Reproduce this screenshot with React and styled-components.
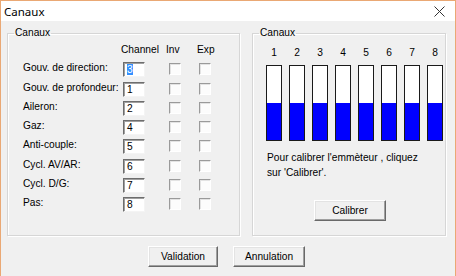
import React from "react";
import styled, { createGlobalStyle } from "styled-components";

const GlobalStyle = createGlobalStyle`
  html, body {
    margin: 0;
    padding: 0;
    background: #f0f0f0;
  }
`;

const Window = styled.div`
  width: 456px;
  height: 276px;
  box-sizing: border-box;
  border: 1px solid #eaa874;
  border-bottom: none;
  background: #f0f0f0;
  display: flex;
  flex-direction: column;
  font-family: "Liberation Sans", Arial, sans-serif;
  font-size: 10.2px;
  color: #000;
  overflow: hidden;
`;

const TitleBar = styled.div`
  height: 20px;
  background: #fff;
  display: flex;
  align-items: center;
  justify-content: space-between;
  padding: 0 10px 0 3px;
  font-family: "Noto Sans", "Open Sans", sans-serif;
  font-size: 11.5px;
  flex-shrink: 0;
`;

const Body = styled.div`
  flex: 1;
  padding: 6px 9px 0 6px;
  display: flex;
  flex-direction: column;
`;

const Groups = styled.div`
  display: flex;
  gap: 12px;
`;

const Group = styled.fieldset`
  margin: 0;
  width: ${({ $w }) => $w}px;
  height: 209px;
  box-sizing: border-box;
  padding: 0;
  border: 1px solid #d6d6d6;
  box-shadow: inset 1px 1px 0 #fff, 1px 1px 0 #fff;
  legend {
    margin-left: 6px;
    padding: 0 1px;
    font-size: 10.2px;
    line-height: 12px;
  }
`;

const Grid = styled.div`
  display: grid;
  grid-template-columns: 100px 22px 54px 40px;
  grid-auto-rows: 19.3px;
  padding: 4px 0 0 15px;
`;

const Head = styled.div`
  line-height: 13px;
  margin-left: ${({ $ml }) => $ml || 0}px;
  white-space: nowrap;
`;

const Row = styled.div`
  display: contents;
`;

const Label = styled.div`
  line-height: 13px;
  margin-top: -1px;
  white-space: nowrap;
`;

const Field = styled.div`
  width: 22px;
  height: 15px;
  box-sizing: border-box;
  background: #fff;
  border-top: 1px solid #6d6d6d;
  border-left: 1px solid #6d6d6d;
  border-right: 1px solid #f4f4f4;
  border-bottom: 1px solid #f4f4f4;
  box-shadow: inset 1px 1px 0 #a0a0a0;
  padding: 1px 0 0 3px;
  line-height: 12px;
  span {
    background: ${({ $sel }) => ($sel ? "#3390ff" : "transparent")};
    color: ${({ $sel }) => ($sel ? "#fff" : "#000")};
  }
`;

const Check = styled.div`
  width: 12px;
  height: 12px;
  box-sizing: border-box;
  margin-left: ${({ $ml }) => $ml || 0}px;
  margin-top: 1px;
  background: #fcfcfc;
  border-top: 1px solid #9a9a9a;
  border-left: 1px solid #9a9a9a;
  border-right: 1px solid #fff;
  border-bottom: 1px solid #fff;
  box-shadow: inset 1px 1px 0 #e3e3e3;
`;

const Bars = styled.div`
  display: grid;
  grid-template-columns: repeat(8, 16px);
  column-gap: 7px;
  padding: 7px 0 0 13px;
`;

const Num = styled.div`
  text-align: center;
  line-height: 13px;
  margin-bottom: 6px;
`;

const Bar = styled.div`
  height: 76px;
  box-sizing: border-box;
  border: 1px solid #1a1a1a;
  background: linear-gradient(
    to bottom,
    #fff 0,
    #fff ${({ $level }) => 100 - $level}%,
    #0000ff ${({ $level }) => 100 - $level}%
  );
`;

const Hint = styled.p`
  margin: 9px 0 0 14px;
  line-height: 15px;
  width: 158px;
`;

const Center = styled.div`
  display: flex;
  justify-content: center;
  gap: 15px;
  margin-top: ${({ $mt }) => $mt}px;
  padding-left: ${({ $pl }) => $pl || 0}px;
`;

const Button = styled.button`
  width: ${({ $w }) => $w}px;
  height: 21px;
  box-sizing: border-box;
  background: #f0f0f0;
  font-family: "Liberation Sans", Arial, sans-serif;
  font-size: 10.2px;
  color: #000;
  padding: 0;
  border-top: 1px solid #fff;
  border-left: 1px solid #fff;
  border-right: 1px solid #696969;
  border-bottom: 1px solid #696969;
  box-shadow: inset -1px -1px 0 #a0a0a0, inset 1px 1px 0 #e3e3e3;
`;

const channels = [
  { label: "Gouv. de direction:", ch: 3 },
  { label: "Gouv. de profondeur:", ch: 1 },
  { label: "Aileron:", ch: 2 },
  { label: "Gaz:", ch: 4 },
  { label: "Anti-couple:", ch: 5 },
  { label: "Cycl. AV/AR:", ch: 6 },
  { label: "Cycl. D/G:", ch: 7 },
  { label: "Pas:", ch: 8 },
];

const levels = [50, 50, 50, 50, 50, 50, 50, 50];

const Close = () => (
  <svg width="11" height="11" viewBox="0 0 11 11">
    <path d="M0.5 0.5 L10.5 10.5 M10.5 0.5 L0.5 10.5" stroke="#333" strokeWidth="1" />
  </svg>
);

export default function App() {
  return (
    <>
      <GlobalStyle />
      <Window>
        <TitleBar>
          <span>Canaux</span>
          <Close />
        </TitleBar>
        <Body>
          <Groups>
            <Group $w={223}>
              <legend>Canaux</legend>
              <Grid>
                <Row>
                  <div />
                  <Head $ml={-2}>Channel</Head>
                  <Head $ml={21}>Inv</Head>
                  <Head $ml={-2}>Exp</Head>
                </Row>
                {channels.map((c, i) => (
                  <Row key={c.label}>
                    <Label>{c.label}</Label>
                    <Field $sel={i === 0}>
                      <span>{c.ch}</span>
                    </Field>
                    <Check $ml={24} />
                    <Check />
                  </Row>
                ))}
              </Grid>
            </Group>
            <Group $w={206}>
              <legend>Canaux</legend>
              <Bars>
                {levels.map((_, i) => (
                  <Num key={i}>{i + 1}</Num>
                ))}
                {levels.map((l, i) => (
                  <Bar key={i} $level={l} />
                ))}
              </Bars>
              <Hint>
                Pour calibrer l'emmèteur , cliquez sur 'Calibrer'.
              </Hint>
              <Center $mt={20} $pl={2}>
                <Button $w={72}>Calibrer</Button>
              </Center>
            </Group>
          </Groups>
          <Center $mt={10} $pl={0}>
            <Button $w={70}>Validation</Button>
            <Button $w={72}>Annulation</Button>
          </Center>
        </Body>
      </Window>
    </>
  );
}
